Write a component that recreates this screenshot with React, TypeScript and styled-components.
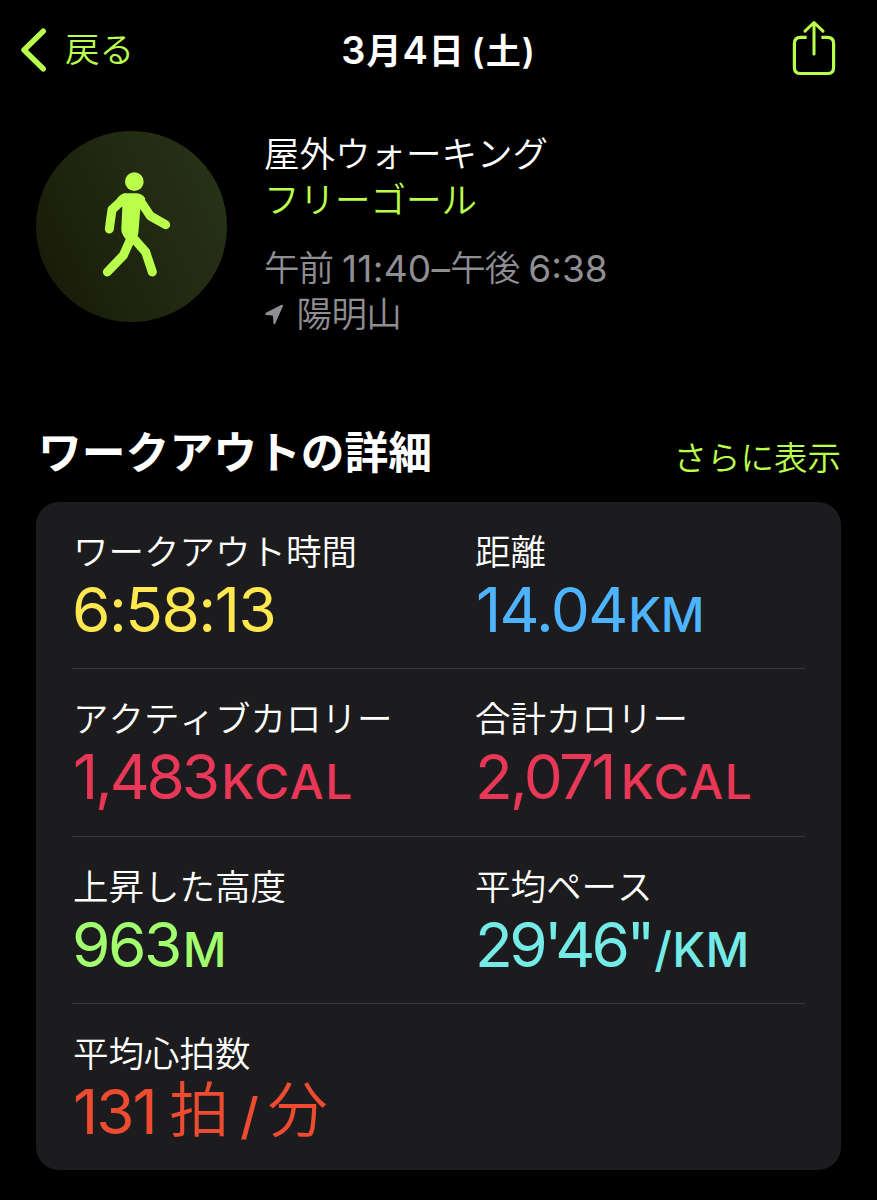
import React from "react";
import styled, { createGlobalStyle } from "styled-components";

const LIME = "#b9ff4b";

const GlobalStyle = createGlobalStyle`
  * { box-sizing: border-box; }
  body {
    margin: 0;
    background: #000;
    font-family: Inter, "Noto Sans CJK JP", sans-serif;
    color: #fff;
  }
`;

const Screen = styled.main`
  width: 877px;
  height: 1200px;
  background: #000;
  overflow: hidden;
`;

const NavBar = styled.header`
  display: grid;
  grid-template-columns: 1fr auto 1fr;
  align-items: center;
  height: 100px;
  padding: 0 20px;
`;

const BackButton = styled.button`
  display: flex;
  align-items: center;
  gap: 18px;
  padding: 0;
  border: 0;
  background: none;
  color: ${LIME};
  font: 350 34.5px/50px Inter, "Noto Sans CJK JP", sans-serif;
`;

const NavTitle = styled.h1`
  margin: 0;
  font-size: 35px;
  line-height: 50px;
  font-weight: 600;
  letter-spacing: 1px;
  word-spacing: -3px;
  white-space: pre;
`;

const TitleDigit = styled.span`
  font-size: 38px;
`;

const ShareButton = styled.button`
  justify-self: end;
  display: flex;
  margin: 0 21px 4px 0;
  padding: 0;
  border: 0;
  background: none;
  color: ${LIME};
`;

const Summary = styled.section`
  display: flex;
  gap: 37px;
  height: 221px;
  padding: 30px 36px 0;
`;

const ActivityBadge = styled.div`
  width: 191px;
  height: 191px;
  margin-top: 0.5px;
  border-radius: 50%;
  background: linear-gradient(65deg, #191c08 10%, #202811 50%, #293418 100%);
`;

const SummaryText = styled.div`
  display: flex;
  flex-direction: column;
  padding-top: 2px;
`;

const SummaryLine = styled.div<{ $color: string; $gapTop?: number; $spacing?: number }>`
  display: flex;
  align-items: center;
  height: 46px;
  margin-top: ${(p) => p.$gapTop ?? 0}px;
  color: ${(p) => p.$color};
  font-size: 35.5px;
  font-weight: 350;
  font-kerning: none;
  line-height: 46px;
  letter-spacing: ${(p) => p.$spacing ?? 0}px;
  white-space: pre;
`;

const Time = styled.span<{ $spacing: number }>`
  font-size: 37px;
  font-weight: 400;
  letter-spacing: ${(p) => p.$spacing}px;
`;

const SectionHeader = styled.div`
  display: flex;
  justify-content: space-between;
  align-items: center;
  height: 80px;
  margin-top: 101px;
  padding: 0 36px 16px 38px;
`;

const SectionTitle = styled.h2`
  margin: 0;
  font-size: 43.8px;
  line-height: 60px;
  font-weight: 700;
  font-kerning: none;
`;

const MoreLink = styled.span`
  padding-top: 8px;
  color: ${LIME};
  font-size: 33.5px;
  line-height: 50px;
  font-weight: 350;
`;

const Card = styled.section`
  height: 668px;
  margin: 0 36px;
  padding: 0 36px;
  border-radius: 23px;
  background: #1c1c1e;
`;

const MetricRow = styled.div`
  display: grid;
  grid-template-columns: 402px 1fr;
  height: 167.3px;
  border-bottom: 1px solid #38383a;
  &:last-child { border-bottom: 0; }
`;

const Metric = styled.div`
  padding: 26px 0 0 1px;
`;

const MetricLabel = styled.div`
  height: 49px;
  font-size: 35.5px;
  line-height: 49px;
  font-weight: 350;
  font-kerning: none;
  white-space: nowrap;
`;

const MetricValue = styled.div<{ $color: string; $inset?: number }>`
  display: flex;
  align-items: baseline;
  height: 66px;
  margin-left: ${(p) => p.$inset ?? 0}px;
  color: ${(p) => p.$color};
  line-height: 66px;
  white-space: pre;
`;

const Digits = styled.span<{ $spacing: number }>`
  font-size: 62px;
  font-weight: 400;
  letter-spacing: ${(p) => p.$spacing}px;
`;

const Unit = styled.span<{ $spacing: number; $gap: number; $size?: number }>`
  margin-left: ${(p) => p.$gap}px;
  font-size: ${(p) => p.$size ?? 48}px;
  font-weight: 450;
  letter-spacing: ${(p) => p.$spacing}px;
`;

const KanjiUnit = styled.span<{ $gap: number }>`
  margin: 0 0 2px ${(p) => p.$gap}px;
  align-self: flex-end;
  font-size: 60px;
  font-weight: 350;
`;

const BackIcon = () => (
  <svg width="27" height="44" viewBox="0 0 27 44" fill="none">
    <path d="M23.2 3.2 4 22l19.2 18.8" stroke="currentColor" strokeWidth="5.4" strokeLinecap="round" strokeLinejoin="round" />
  </svg>
);

const ShareIcon = () => (
  <svg width="44" height="56" viewBox="0 0 44 56" fill="none" stroke="currentColor" strokeLinecap="round" strokeLinejoin="round">
    <path d="M14.6 17.3H8.5Q2.4 17.3 2.4 23.4V47.4Q2.4 53.5 8.5 53.5H35.5Q41.6 53.5 41.6 47.4V23.4Q41.6 17.3 35.5 17.3H29.4" strokeWidth="3.2" strokeLinecap="butt" />
    <path d="M22 34V2.5M13 11.2 22 2.5l9 8.7" strokeWidth="3" />
  </svg>
);

const WalkIcon = () => (
  <svg width="191" height="191" viewBox="48 62 573 573" fill="none" stroke={LIME} strokeWidth="27" strokeLinecap="round" strokeLinejoin="round">
    <circle cx="343" cy="214" r="28" fill={LIME} stroke="none" />
    <path d="M316 249H350Q367 250 376 265L361 296L355 368Q354 375 350 382L318 387Q304 372 304 356L307 291L290 266Q303 250 316 249Z" fill={LIME} stroke="none" />
    <path d="M314 263 276 298 268 356" />
    <path d="M357 266 391 317 437 343" />
    <path d="M334 382 310 435 262 485" />
    <path d="M340 383 377 425 397 485" />
  </svg>
);

const LocationIcon = () => (
  <svg width="20" height="22" viewBox="0 0 20 22">
    <path d="M1.9 8.8 17.6.8Q19.6.2 18.9 2.2L11.3 19.4Q10 21.4 9.4 19.4L9 12.6Q8.9 11.7 8 11.6L2.2 11Q.3 10.2 1.9 8.8Z" fill="currentColor" />
  </svg>
);

const Place = styled.span`
  margin-left: 12.5px;
`;

type MetricData = {
  label: string;
  color: string;
  digits: string;
  spacing: number;
  inset?: number;
  unit?: string;
  unitSpacing?: number;
  unitGap?: number;
};

const rows: MetricData[][] = [
  [
    { label: "ワークアウト時間", color: "#ffe74f", digits: "6:58:13", spacing: -1.5, inset: -1 },
    { label: "距離", color: "#4eb4ff", digits: "14.04", spacing: -1.6, inset: 1, unit: "KM", unitSpacing: -0.5, unitGap: 1.5 },
  ],
  [
    { label: "アクティブカロリー", color: "#e93757", digits: "1,483", spacing: -3.2, unit: "KCAL", unitSpacing: 1.5, unitGap: 4.5 },
    { label: "合計カロリー", color: "#e93757", digits: "2,071", spacing: -2.7, unit: "KCAL", unitSpacing: 1.5, unitGap: 7 },
  ],
  [
    { label: "上昇した高度", color: "#a2ff6e", digits: "963", spacing: -2.5, inset: -1, unit: "M", unitGap: 3 },
    { label: "平均ペース", color: "#74ebe6", digits: "29'46\"", spacing: -3.6, unit: "/KM", unitSpacing: 0.3, unitGap: 2.5 },
  ],
];

export default function App() {
  return (
    <>
      <GlobalStyle />
      <Screen>
        <NavBar>
          <BackButton><BackIcon />戻る</BackButton>
          <NavTitle><TitleDigit>3</TitleDigit>月<TitleDigit>4</TitleDigit>日 (土)</NavTitle>
          <ShareButton aria-label="共有"><ShareIcon /></ShareButton>
        </NavBar>
        <Summary>
          <ActivityBadge><WalkIcon /></ActivityBadge>
          <SummaryText>
            <SummaryLine $color="#fff">屋外ウォーキング</SummaryLine>
            <SummaryLine $color={LIME}>フリーゴール</SummaryLine>
            <SummaryLine $color="#8e8e93" $gapTop={22} $spacing={-1}>
              午前 <Time $spacing={0.3}>11:40–</Time>午後 <Time $spacing={0}>6:38</Time>
            </SummaryLine>
            <SummaryLine $color="#8e8e93" $spacing={-0.6}><LocationIcon /><Place>陽明山</Place></SummaryLine>
          </SummaryText>
        </Summary>
        <SectionHeader>
          <SectionTitle>ワークアウトの詳細</SectionTitle>
          <MoreLink>さらに表示</MoreLink>
        </SectionHeader>
        <Card>
          {rows.map((row, i) => (
            <MetricRow key={i}>
              {row.map((m) => (
                <Metric key={m.label}>
                  <MetricLabel>{m.label}</MetricLabel>
                  <MetricValue $color={m.color} $inset={m.inset}>
                    <Digits $spacing={m.spacing}>{m.digits}</Digits>
                    {m.unit && <Unit $spacing={m.unitSpacing ?? 0} $gap={m.unitGap ?? 0}>{m.unit}</Unit>}
                  </MetricValue>
                </Metric>
              ))}
            </MetricRow>
          ))}
          <MetricRow>
            <Metric>
              <MetricLabel>平均心拍数</MetricLabel>
              <MetricValue $color="#ee4b31">
                <Digits $spacing={-2}>131</Digits>
                <KanjiUnit $gap={13.5}>拍</KanjiUnit>
                <Unit $spacing={0} $gap={11} $size={50}>/</Unit>
                <KanjiUnit $gap={9}>分</KanjiUnit>
              </MetricValue>
            </Metric>
          </MetricRow>
        </Card>
      </Screen>
    </>
  );
}
